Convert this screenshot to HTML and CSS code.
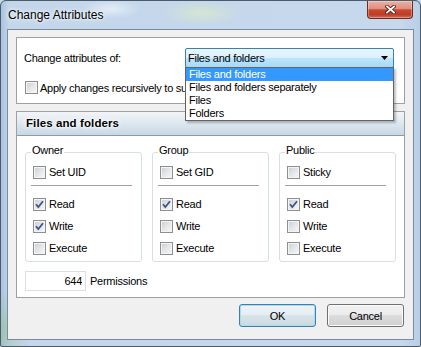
FILE: index.html
```html
<!DOCTYPE html>
<html lang="en">
<head>
    <meta charset="UTF-8">
    <title>Change Attributes</title>
    <link rel="stylesheet" href="styles.css">
</head>
<body>
    <div class="window">
        <div class="titlebar">
            <span class="title">Change Attributes</span>
            <button class="close-button" title="Close">
                <svg width="11" height="9" viewBox="0 0 11 9">
                    <path d="M2 1.5 L9 7.5 M9 1.5 L2 7.5" stroke="#5a2219" stroke-width="3.6" stroke-linecap="square" fill="none"/>
                    <path d="M2 1.5 L9 7.5 M9 1.5 L2 7.5" stroke="#fff" stroke-width="1.8" stroke-linecap="square" fill="none"/>
                </svg>
            </button>
        </div>
        <div class="client">
            <div class="panel panel-top">
                <div class="field-row">
                    <span class="field-label">Change attributes of:</span>
                    <div class="combo">
                        <span>Files and folders</span>
                        <svg class="combo-arrow" width="7" height="4" viewBox="0 0 7 4"><path d="M0 0 H7 L3.5 4 Z" fill="#000"/></svg>
                        <ul class="combo-list">
                            <li class="active">Files and folders</li>
                            <li>Files and folders separately</li>
                            <li>Files</li>
                            <li>Folders</li>
                        </ul>
                    </div>
                </div>
                <label class="check apply"><span class="cb"></span>Apply changes recursively to subdirectories</label>
            </div>

            <div class="panel section">
                <div class="section-header">Files and folders</div>
                <div class="section-body">
                    <div class="groups">
                        <div class="group">
                            <div class="group-title">Owner</div>
                            <label class="check"><span class="cb"></span>Set UID</label>
                            <div class="sep"></div>
                            <label class="check"><span class="cb checked"><svg width="11" height="11" viewBox="0 0 11 11"><path d="M2 5.2 L4.3 8 L9 2.2" stroke="#3f5488" stroke-width="1.8" fill="none"/></svg></span>Read</label>
                            <label class="check"><span class="cb checked"><svg width="11" height="11" viewBox="0 0 11 11"><path d="M2 5.2 L4.3 8 L9 2.2" stroke="#3f5488" stroke-width="1.8" fill="none"/></svg></span>Write</label>
                            <label class="check"><span class="cb"></span>Execute</label>
                        </div>
                        <div class="group">
                            <div class="group-title">Group</div>
                            <label class="check"><span class="cb"></span>Set GID</label>
                            <div class="sep"></div>
                            <label class="check"><span class="cb checked"><svg width="11" height="11" viewBox="0 0 11 11"><path d="M2 5.2 L4.3 8 L9 2.2" stroke="#3f5488" stroke-width="1.8" fill="none"/></svg></span>Read</label>
                            <label class="check"><span class="cb"></span>Write</label>
                            <label class="check"><span class="cb"></span>Execute</label>
                        </div>
                        <div class="group">
                            <div class="group-title">Public</div>
                            <label class="check"><span class="cb"></span>Sticky</label>
                            <div class="sep"></div>
                            <label class="check"><span class="cb checked"><svg width="11" height="11" viewBox="0 0 11 11"><path d="M2 5.2 L4.3 8 L9 2.2" stroke="#3f5488" stroke-width="1.8" fill="none"/></svg></span>Read</label>
                            <label class="check"><span class="cb"></span>Write</label>
                            <label class="check"><span class="cb"></span>Execute</label>
                        </div>
                    </div>
                    <div class="perm-row">
                        <input class="perm-input" type="text" value="644">
                        <span>Permissions</span>
                    </div>
                </div>
            </div>

            <div class="buttons">
                <button class="btn btn-default">OK</button>
                <button class="btn">Cancel</button>
            </div>
        </div>
    </div>
</body>
</html>
```

FILE: styles.css
```css
* {
    box-sizing: border-box;
}

body {
    margin: 0;
    font-family: "Liberation Sans", Arial, sans-serif;
    font-size: 11px;
    letter-spacing: -0.25px;
    color: #000;
    background-color: #c4d7ea;
}

.window {
    display: flex;
    flex-direction: column;
    width: 421px;
    height: 347px;
    padding: 0 6px 6px 6px;
    border: 1px solid #4c5a6a;
    border-radius: 6px 6px 2px 2px;
    background:
        radial-gradient(ellipse 40px 12px at 200px 12px, rgba(220, 235, 200, 0.7), transparent),
        radial-gradient(ellipse 30px 10px at 110px 8px, rgba(235, 242, 250, 0.8), transparent),
        radial-gradient(ellipse 30px 40px at 0 330px, rgba(150, 190, 150, 0.6), transparent),
        linear-gradient(to right, #a9c3df 0, #c3d6ea 8px, #c6d9ec 95%, #b8cfe7 100%);
}

.titlebar {
    display: flex;
    justify-content: space-between;
    align-items: flex-start;
    height: 28px;
    padding-left: 1px;
}

.title {
    margin-top: 7px;
    font-size: 12px;
    line-height: 14px;
    letter-spacing: 0;
    text-shadow: 0 0 6px #fff, 0 0 3px #fff;
}

.close-button {
    display: flex;
    align-items: center;
    justify-content: center;
    width: 46px;
    height: 18px;
    margin-right: 1px;
    padding: 0;
    border: 1px solid #6e2a20;
    border-top: none;
    border-radius: 0 0 4px 4px;
    background: linear-gradient(#eab1a4 0%, #de8f7f 45%, #c84a33 52%, #c03b25 80%, #d46d55 100%);
    box-shadow: inset 0 0 0 1px rgba(255, 255, 255, 0.3);
}

.client {
    flex: 1;
    display: flex;
    flex-direction: column;
    padding: 7px 8px 0 8px;
    border: 1px solid #7b8b9e;
    background-color: #f0f0f0;
}

.panel {
    border: 1px solid #a0a0a0;
    background-color: #fff;
}

.panel-top {
    padding: 10px 7px 5px 7px;
}

.field-row {
    display: flex;
    align-items: center;
    height: 20px;
}

.field-label {
    width: 161px;
}

.combo {
    position: relative;
    display: flex;
    align-items: center;
    justify-content: space-between;
    width: 209px;
    height: 20px;
    padding: 0 5px 0 2px;
    border: 1px solid #3c7fb1;
    border-radius: 2px;
    background: linear-gradient(#eaf6fd 0%, #d9f0fc 50%, #bee6fd 50%, #a7d9f5 100%);
}

.combo-list {
    position: absolute;
    top: 18px;
    left: -1px;
    z-index: 5;
    width: 209px;
    margin: 0;
    padding: 0;
    list-style: none;
    border: 1px solid #646464;
    background-color: #fff;
    box-shadow: 2px 2px 2px rgba(0, 0, 0, 0.25);
}

.combo-list li {
    height: 13px;
    padding-left: 3px;
    line-height: 13px;
}

.combo-list li.active {
    background-color: #3399ff;
    color: #fff;
}

.check {
    display: flex;
    align-items: center;
    gap: 3px;
    height: 22px;
    white-space: nowrap;
}

.apply {
    height: 21px;
    margin: 9px 0 0 1px;
    gap: 2px;
}

.cb {
    flex: none;
    width: 13px;
    height: 13px;
    border: 1px solid #8e8f8f;
    background: linear-gradient(135deg, #c9cdd3 0%, #e4e6e8 50%, #f7f7f7 100%);
    box-shadow: inset 0 0 0 1px #f4f4f4;
}

.cb svg {
    display: block;
}

.section {
    margin-top: 7px;
}

.section-header {
    height: 24px;
    padding-left: 9px;
    border-bottom: 1px solid #8d99a4;
    background: linear-gradient(#f2f5f8 0%, #dde7ef 50%, #c7d8e5 100%);
    font-size: 11.5px;
    font-weight: bold;
    line-height: 23px;
    letter-spacing: 0.1px;
    text-shadow: 0 0 4px #fff, 0 0 2px #fff, 0 0 6px #fff;
}

.section-body {
    padding: 16px 8px 6px 8px;
}

.groups {
    display: grid;
    grid-template-columns: repeat(3, 117px);
    column-gap: 10px;
}

.group {
    padding: 0 6px 2px 7px;
    border: 1px solid #d5dfe5;
    border-radius: 3px;
}

.group-title {
    width: max-content;
    margin: -9px 0 4px -2px;
    padding: 0 1px;
    line-height: 13px;
    background-color: #fff;
}

.sep {
    height: 1px;
    margin: 2px 3px 7px -2px;
    background-color: #a0a0a0;
}

.perm-row {
    display: flex;
    align-items: center;
    gap: 4px;
    margin-top: 9px;
}

.perm-input {
    width: 61px;
    height: 20px;
    padding: 0 3px 0 0;
    border: 1px solid #dadfe6;
    font-family: inherit;
    font-size: 11px;
    letter-spacing: -0.25px;
    text-align: right;
    outline: none;
}

.buttons {
    display: flex;
    justify-content: flex-end;
    gap: 11px;
    margin-top: 6px;
    padding-right: 1px;
}

.btn {
    width: 77px;
    height: 23px;
    padding: 0;
    border: 1px solid #707070;
    border-radius: 3px;
    background: linear-gradient(#f2f2f2 0%, #ebebeb 50%, #dddddd 50%, #cfcfcf 100%);
    box-shadow: inset 0 0 0 1px #fbfbfb;
    font-family: inherit;
    font-size: 11px;
    letter-spacing: -0.25px;
    color: #000;
}

.btn-default {
    border-color: #3c7fb1;
    background: linear-gradient(#eef3f6 0%, #e6edf1 50%, #d9e3e9 50%, #ccd9e1 100%);
    box-shadow: inset 0 0 0 1px #a8dcf3;
}
```
